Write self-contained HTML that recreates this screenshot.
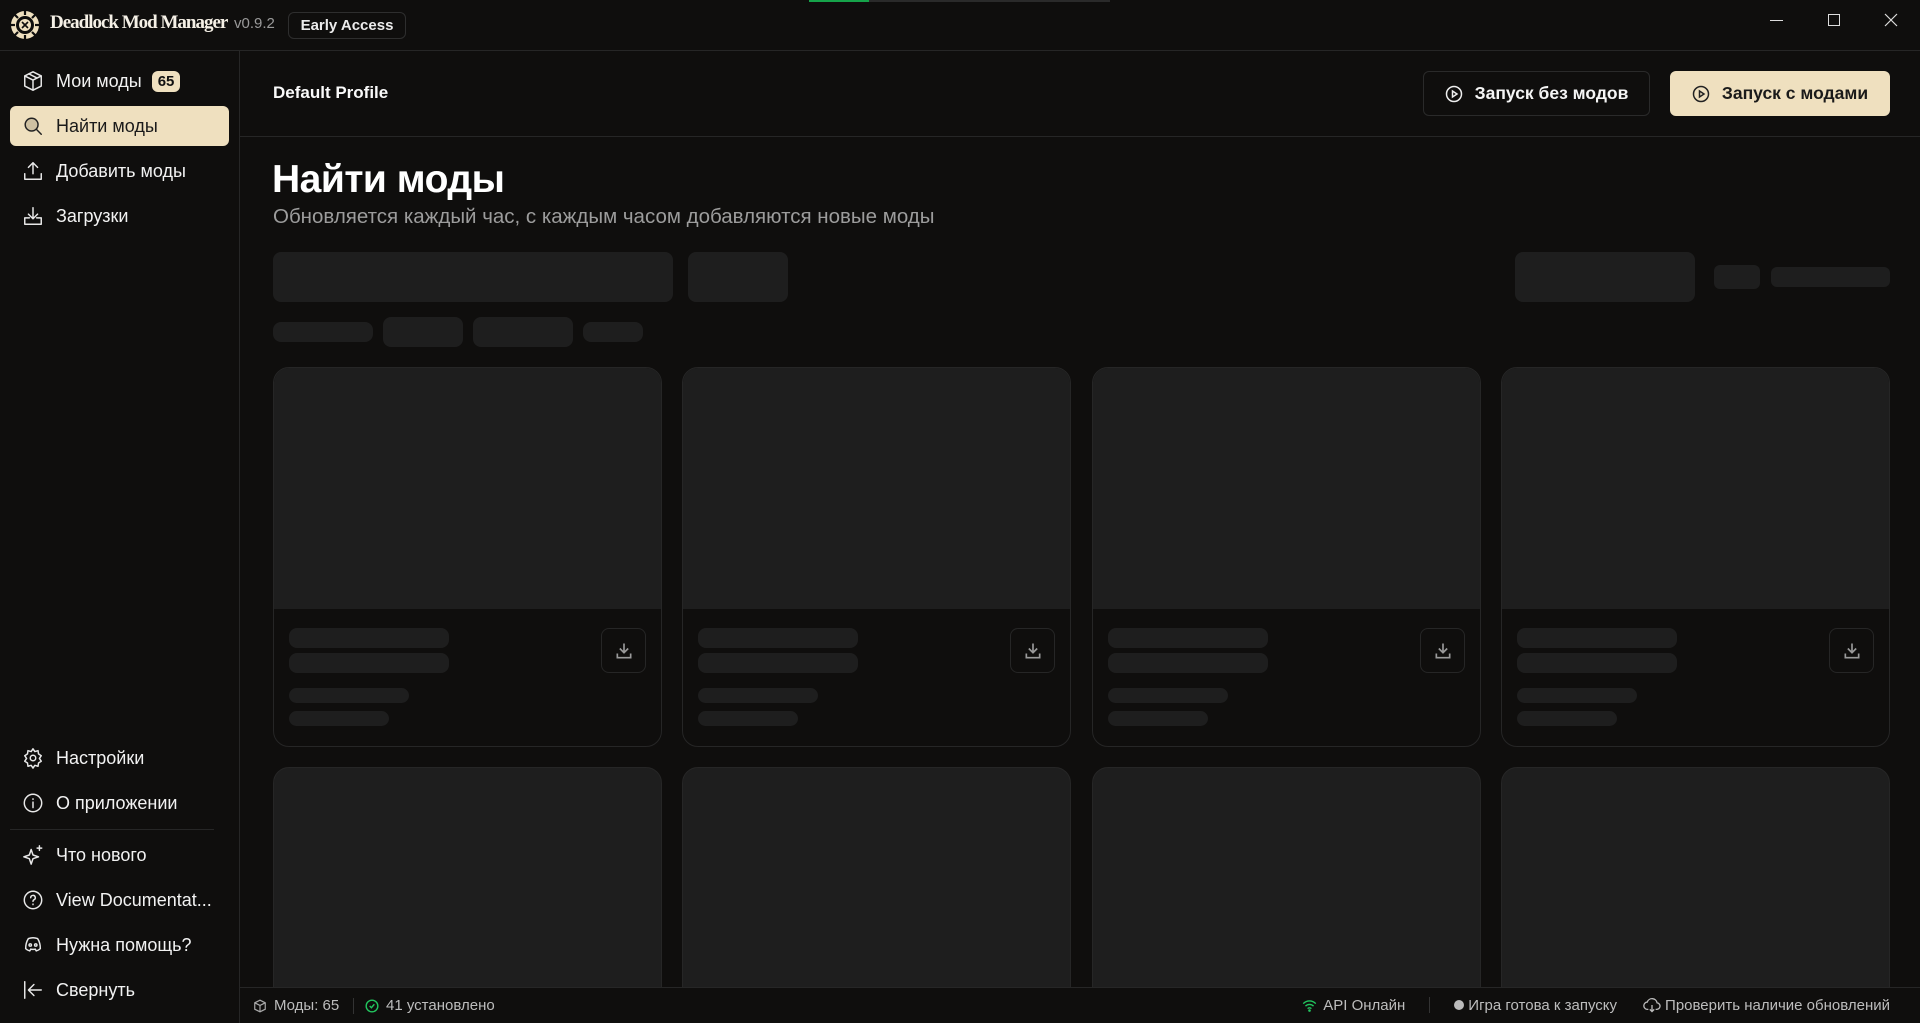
<!DOCTYPE html>
<html style="width:1920px;height:1023px;overflow:hidden"><head><meta charset="utf-8"><style>
*{box-sizing:border-box;margin:0;padding:0}
body{width:1920px;height:1023px;background:#0f0e0d;color:#f2f2f2;font-family:"Liberation Sans","DejaVu Sans",sans-serif;position:relative;overflow:hidden}
.a{position:absolute}
.sk{position:absolute;background:#1e1e1e;border-radius:8px}
.line{position:absolute;background:#262626}
.nav{position:absolute;left:22px;display:flex;align-items:center;font-size:18px;color:#f2f2f2}
.nav svg{width:22px;height:22px;margin-right:12px;fill:none;stroke:#e8e8e8;stroke-width:1.6;stroke-linecap:round;stroke-linejoin:round}
.card{position:absolute;width:389px;height:380px;border:1px solid #262626;border-radius:16px;overflow:hidden}
.card .img{position:absolute;left:0;top:0;right:0;height:241px;background:#1e1e1e}
.card .b{position:absolute;background:#1e1e1e;border-radius:8px}
.dl{position:absolute;left:327px;top:260px;width:45px;height:45px;border:1px solid #262626;border-radius:8px;display:flex;align-items:center;justify-content:center}
.st{position:absolute;top:997px;font-size:15px;color:#bdbdbd;display:flex;align-items:center}
.sr{position:absolute;right:30px;top:987px;height:36px;display:flex;align-items:center;font-size:15px;color:#bdbdbd;white-space:nowrap}
.sr>span{display:flex;align-items:center}
</style></head><body>
<!-- top bar -->
<div class="a" style="left:809px;top:0;width:60px;height:2px;background:#16a34a"></div>
<div class="a" style="left:869px;top:0;width:241px;height:2px;background:#2a2a2a"></div>
<svg class="a" style="left:10px;top:10px" width="30" height="30" viewBox="0 0 30 30"><circle cx="15" cy="15" r="14" fill="#efe0bf"/><circle cx="15" cy="15" r="9" fill="#0f0e0d"/><g stroke="#0f0e0d" stroke-width="2.2"><line x1="15" y1="1" x2="15" y2="5"/><line x1="15" y1="25" x2="15" y2="29"/><line x1="1" y1="15" x2="5" y2="15"/><line x1="25" y1="15" x2="29" y2="15"/><line x1="5" y1="5" x2="8" y2="8"/><line x1="22" y1="22" x2="25" y2="25"/><line x1="25" y1="5" x2="22" y2="8"/><line x1="5" y1="25" x2="8" y2="22"/></g><circle cx="15" cy="15" r="6" fill="#efe0bf"/><path d="M12 18l6-6M12 12l6 6" stroke="#0f0e0d" stroke-width="1.6"/></svg>
<div class="a" style="left:50px;top:12px;font-family:'Liberation Serif',serif;font-weight:bold;font-size:19px;letter-spacing:-1px;color:#f5f0e6">Deadlock Mod Manager</div>
<div class="a" style="left:234px;top:15px;font-size:15px;color:#9a9a9a">v0.9.2</div>
<div class="a" style="left:288px;top:12px;width:118px;height:27px;border:1px solid #2e2e2e;border-radius:6px;font-size:15px;font-weight:bold;color:#ececec;text-align:center;line-height:25px">Early Access</div>
<div class="a" style="left:1770px;top:20px;width:13px;height:1px;background:#ddd"></div>
<div class="a" style="left:1828px;top:14px;width:12px;height:12px;border:1px solid #ddd"></div>
<svg class="a" style="left:1884px;top:13px" width="14" height="14"><path d="M1 1L13 13M13 1L1 13" stroke="#ddd" stroke-width="1.2"/></svg>
<div class="line" style="left:0;top:50px;width:1920px;height:1px"></div>
<div class="line" style="left:239px;top:50px;width:1px;height:973px"></div>

<!-- sidebar -->
<div class="a" style="left:10px;top:106px;width:219px;height:40px;background:#efe0bf;border-radius:6px"></div>
<div class="nav" style="top:70px"><svg viewBox="0 0 24 24"><path d="M12 2l9 4.5v11L12 22l-9-4.5v-11z"/><path d="M3 6.5l9 4.5 9-4.5M12 11v11M7.5 4.2l9 4.6"/></svg>Мои моды<span style="margin-left:10px;background:#efe0bf;color:#111;font-weight:bold;font-size:15px;border-radius:6px;padding:2px 6px">65</span></div>
<div class="nav" style="top:115px;color:#1a1a1a"><svg viewBox="0 0 24 24" style="stroke:#222"><circle cx="10.5" cy="10.5" r="7" fill="#cfc1a2"/><path d="M16 16l5 5"/></svg>Найти моды</div>
<div class="nav" style="top:160px"><svg viewBox="0 0 24 24"><path d="M3 15v6h18v-6M12 15V3M7 8l5-5 5 5"/></svg>Добавить моды</div>
<div class="nav" style="top:205px"><svg viewBox="0 0 24 24"><path d="M3 14v7h18v-7h-5M8 14H3M12 3v12M7 10l5 5 5-5"/></svg>Загрузки</div>
<div class="nav" style="top:747px"><svg viewBox="0 0 24 24"><circle cx="12" cy="12" r="3"/><path d="M12 2l2 3 3.5-1 .5 3.5 3 2-2 3 2 3-3 2-.5 3.5-3.5-1-2 3-2-3-3.5 1-.5-3.5-3-2 2-3-2-3 3-2 .5-3.5 3.5 1z"/></svg>Настройки</div>
<div class="nav" style="top:792px"><svg viewBox="0 0 24 24"><circle cx="12" cy="12" r="9.5"/><path d="M12 11v6M12 7.5v.5"/></svg>О приложении</div>
<div class="line" style="left:10px;top:829px;width:204px;height:1px"></div>
<div class="nav" style="top:844px"><svg viewBox="0 0 24 24"><path d="M10 6l2 6 6 2-6 2-2 6-2-6-6-2 6-2z"/><path d="M19 2v5M16.5 4.5h5"/></svg>Что нового</div>
<div class="nav" style="top:889px"><svg viewBox="0 0 24 24"><circle cx="12" cy="12" r="9.5"/><path d="M9.5 9.5a2.5 2.5 0 1 1 3.5 2.3c-.7.4-1 1-1 1.7M12 16.5v.5"/></svg>View Documentat...</div>
<div class="nav" style="top:934px"><svg viewBox="0 0 24 24"><path d="M7 5c2-.7 3-.9 5-.9s3 .2 5 .9c2 3 3 6 3 11-1.5 1.5-3 2.2-4.5 2.5l-1-2c-1.6.4-3.4.4-5 0l-1 2C7 18.2 5.5 17.5 4 16c0-5 1-8 3-11z"/><circle cx="9" cy="12" r="1.3"/><circle cx="15" cy="12" r="1.3"/></svg>Нужна помощь?</div>
<div class="nav" style="top:979px"><svg viewBox="0 0 24 24"><path d="M3 3v18M21 12H8M13 6l-6 6 6 6"/></svg>Свернуть</div>

<!-- header -->
<div class="a" style="left:273px;top:83px;font-size:17px;font-weight:bold;color:#fafafa">Default Profile</div>
<div class="a" style="left:1423px;top:71px;width:227px;height:45px;border:1px solid #2a2a2a;border-radius:6px;display:flex;align-items:center;justify-content:center;font-size:17.5px;font-weight:bold;color:#f5f5f5"><svg width="18" height="18" viewBox="0 0 24 24" style="margin-right:12px" fill="none" stroke="#eee" stroke-width="2"><circle cx="12" cy="12" r="10"/><path d="M10 8l6 4-6 4z"/></svg>Запуск без модов</div>
<div class="a" style="left:1670px;top:71px;width:220px;height:45px;background:#efe0bf;border-radius:6px;display:flex;align-items:center;justify-content:center;font-size:17.5px;font-weight:bold;color:#1a1a1a"><svg width="18" height="18" viewBox="0 0 24 24" style="margin-right:12px" fill="none" stroke="#222" stroke-width="2"><circle cx="12" cy="12" r="10"/><path d="M10 8l6 4-6 4z"/></svg>Запуск с модами</div>
<div class="line" style="left:240px;top:136px;width:1680px;height:1px"></div>

<div class="a" style="left:272px;top:158px;font-size:39px;font-weight:bold;color:#fff;letter-spacing:-0.5px">Найти моды</div>
<div class="a" style="left:273px;top:205px;font-size:20.5px;color:#9c9c9c">Обновляется каждый час, с каждым часом добавляются новые моды</div>

<div class="sk" style="left:273px;top:252px;width:400px;height:50px"></div>
<div class="sk" style="left:688px;top:252px;width:100px;height:50px"></div>
<div class="sk" style="left:1515px;top:252px;width:180px;height:50px"></div>
<div class="sk" style="left:1714px;top:265px;width:46px;height:24px;border-radius:6px"></div>
<div class="sk" style="left:1771px;top:267px;width:119px;height:20px;border-radius:6px"></div>
<div class="sk" style="left:273px;top:322px;width:100px;height:20px"></div>
<div class="sk" style="left:383px;top:317px;width:80px;height:30px"></div>
<div class="sk" style="left:473px;top:317px;width:100px;height:30px"></div>
<div class="sk" style="left:583px;top:322px;width:60px;height:20px"></div>

<!-- cards -->
<div class="card" style="left:273px;top:367px"><div class="img"></div><div class="b" style="left:15px;top:260px;width:160px;height:20px"></div><div class="b" style="left:15px;top:285px;width:160px;height:20px"></div><div class="b" style="left:15px;top:320px;width:120px;height:15px"></div><div class="b" style="left:15px;top:343px;width:100px;height:15px"></div><div class="dl"><svg width="20" height="20" viewBox="0 0 24 24" fill="none" stroke="#9a9a9a" stroke-width="2"><path d="M12 3v11M7 9l5 5 5-5M4 15v5h16v-5"/></svg></div></div>
<div class="card" style="left:682px;top:367px"><div class="img"></div><div class="b" style="left:15px;top:260px;width:160px;height:20px"></div><div class="b" style="left:15px;top:285px;width:160px;height:20px"></div><div class="b" style="left:15px;top:320px;width:120px;height:15px"></div><div class="b" style="left:15px;top:343px;width:100px;height:15px"></div><div class="dl"><svg width="20" height="20" viewBox="0 0 24 24" fill="none" stroke="#9a9a9a" stroke-width="2"><path d="M12 3v11M7 9l5 5 5-5M4 15v5h16v-5"/></svg></div></div>
<div class="card" style="left:1092px;top:367px"><div class="img"></div><div class="b" style="left:15px;top:260px;width:160px;height:20px"></div><div class="b" style="left:15px;top:285px;width:160px;height:20px"></div><div class="b" style="left:15px;top:320px;width:120px;height:15px"></div><div class="b" style="left:15px;top:343px;width:100px;height:15px"></div><div class="dl"><svg width="20" height="20" viewBox="0 0 24 24" fill="none" stroke="#9a9a9a" stroke-width="2"><path d="M12 3v11M7 9l5 5 5-5M4 15v5h16v-5"/></svg></div></div>
<div class="card" style="left:1501px;top:367px"><div class="img"></div><div class="b" style="left:15px;top:260px;width:160px;height:20px"></div><div class="b" style="left:15px;top:285px;width:160px;height:20px"></div><div class="b" style="left:15px;top:320px;width:120px;height:15px"></div><div class="b" style="left:15px;top:343px;width:100px;height:15px"></div><div class="dl"><svg width="20" height="20" viewBox="0 0 24 24" fill="none" stroke="#9a9a9a" stroke-width="2"><path d="M12 3v11M7 9l5 5 5-5M4 15v5h16v-5"/></svg></div></div>
<div class="card" style="left:273px;top:767px;height:256px;background:#1e1e1e"></div>
<div class="card" style="left:682px;top:767px;height:256px;background:#1e1e1e"></div>
<div class="card" style="left:1092px;top:767px;height:256px;background:#1e1e1e"></div>
<div class="card" style="left:1501px;top:767px;height:256px;background:#1e1e1e"></div>

<!-- status bar -->
<div class="a" style="left:240px;top:987px;width:1680px;height:36px;background:#0f0e0d;border-top:1px solid #262626"></div>
<div class="st" style="left:253px"><svg width="14" height="14" viewBox="0 0 24 24" fill="none" stroke="#aaa" stroke-width="2" style="margin-right:7px"><path d="M12 2l9 4.5v11L12 22l-9-4.5v-11z"/><path d="M3 6.5l9 4.5 9-4.5M12 11v11"/></svg>Моды: 65</div>
<div class="a" style="left:353px;top:998px;width:1px;height:16px;background:#333"></div>
<div class="st" style="left:365px"><svg width="14" height="14" viewBox="0 0 24 24" fill="none" stroke="#22c55e" stroke-width="2.4" style="margin-right:7px"><circle cx="12" cy="12" r="10"/><path d="M8 12l3 3 5-6"/></svg>41 установлено</div>
<div class="sr">
<span><svg width="15" height="13" viewBox="0 0 24 20" fill="none" stroke="#22c55e" stroke-width="2.2" style="margin-right:6px"><path d="M2 7a14 14 0 0 1 20 0M5.5 11a9 9 0 0 1 13 0M9 15a4 4 0 0 1 6 0"/><circle cx="12" cy="18" r="1" fill="#22c55e"/></svg>API Онлайн</span>
<span style="width:1px;height:16px;background:#333;margin:0 24px"></span>
<span><span style="width:10px;height:10px;border-radius:50%;background:#bbb;margin-right:4px;display:inline-block"></span>Игра готова к запуску</span>
<span style="margin-left:26px"><svg width="18" height="16" viewBox="0 0 24 22" fill="none" stroke="#bbb" stroke-width="1.8" style="margin-right:4px"><path d="M7 17H6a5 5 0 0 1-.5-10A7 7 0 0 1 19 8a4.5 4.5 0 0 1-1 9h-1"/><path d="M12 11v9M9 17l3 3 3-3"/></svg>Проверить наличие обновлений</span>
</div>
</body></html>
